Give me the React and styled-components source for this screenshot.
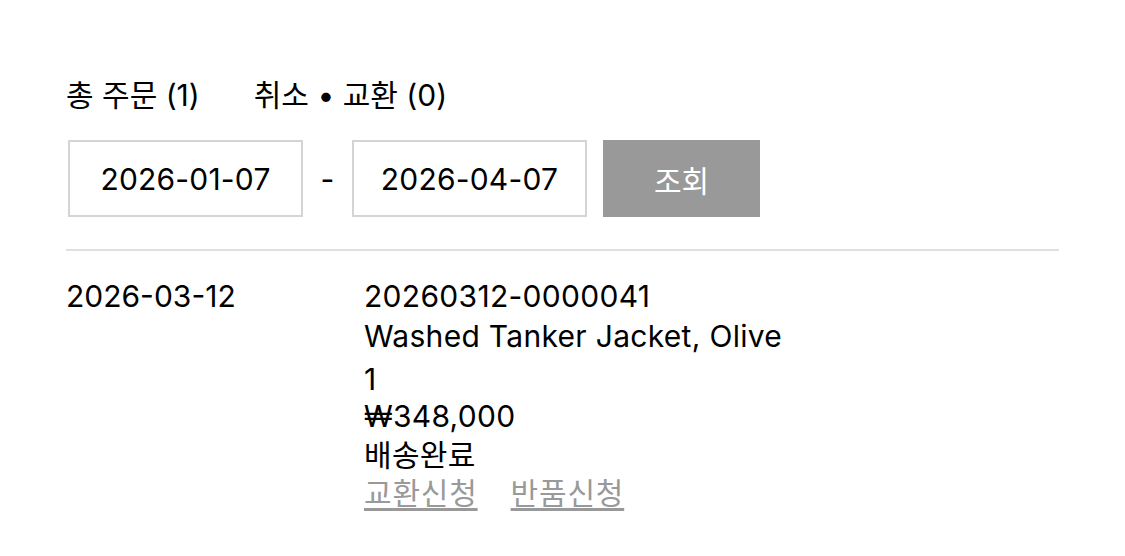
import styled, { createGlobalStyle } from 'styled-components';

const GlobalStyle = createGlobalStyle`
  body {
    margin: 0;
    background: #fff;
    font-family: Inter, "Noto Sans CJK KR", sans-serif;
    color: #000;
  }
`;

const order = {
  date: '2026-03-12',
  number: '20260312-0000041',
  name: 'Washed Tanker Jacket, Olive',
  qty: '1',
  price: '₩348,000',
  status: '배송완료',
};

const App = () => {
  return (
    <>
      <GlobalStyle />
      <Page>
        <Tabs>
          <Tab>총 주문 (1)</Tab>
          <Tab>취소 • 교환 (0)</Tab>
        </Tabs>

        <Filter>
          <DateBox>2026-01-07</DateBox>
          <Dash>-</Dash>
          <DateBox>2026-04-07</DateBox>
          <SearchButton>조회</SearchButton>
        </Filter>

        <Divider />

        <OrderRow>
          <OrderDate>{order.date}</OrderDate>
          <Details>
            <Line>{order.number}</Line>
            <Line $top={1}>{order.name}</Line>
            <Line $top={4}>{order.qty}</Line>
            <Line $top={-2}>{order.price}</Line>
            <Line>{order.status}</Line>
            <Links>
              <LinkText>교환신청</LinkText>
              <LinkText>반품신청</LinkText>
            </Links>
          </Details>
        </OrderRow>
      </Page>
    </>
  );
};

const Page = styled.div`
  width: 993px;
  padding: 76px 0 0 66px;
`;

const Tabs = styled.div`
  display: flex;
  gap: 54px;
  font-size: 30px;
  line-height: 38px;
`;

const Tab = styled.span`
  white-space: nowrap;
`;

const Filter = styled.div`
  display: flex;
  align-items: center;
  margin-top: 26px;
  padding-left: 2px;
`;

const DateBox = styled.div`
  width: 235px;
  height: 77px;
  box-sizing: border-box;
  border: 2px solid #d4d4d4;
  display: flex;
  align-items: center;
  justify-content: center;
  font-size: 30px;
  letter-spacing: 0.2px;
`;

const Dash = styled.span`
  width: 49px;
  text-align: center;
  font-size: 30px;
`;

const SearchButton = styled.button`
  width: 157px;
  height: 77px;
  margin-left: 16px;
  border: none;
  background: #999;
  color: #fff;
  font-family: inherit;
  font-size: 30px;
  padding: 0;
`;

const Divider = styled.hr`
  margin: 32px 0 0;
  border: none;
  height: 2px;
  background: #e0e0e0;
`;

const OrderRow = styled.div`
  display: flex;
  padding-top: 26px;
  font-size: 30px;
  line-height: 39px;
  letter-spacing: 0.3px;
`;

const OrderDate = styled.div`
  width: 298px;
  letter-spacing: 0;
`;

const Details = styled.div`
  display: flex;
  flex-direction: column;
`;

const Line = styled.div`
  margin-top: ${(p) => p.$top || 0}px;
`;

const Links = styled.div`
  display: flex;
  gap: 33px;
  margin-top: -1px;
`;

const LinkText = styled.span`
  color: #999;
  letter-spacing: 0.8px;
  text-decoration: underline;
  text-underline-offset: 4px;
`;

export default App;
